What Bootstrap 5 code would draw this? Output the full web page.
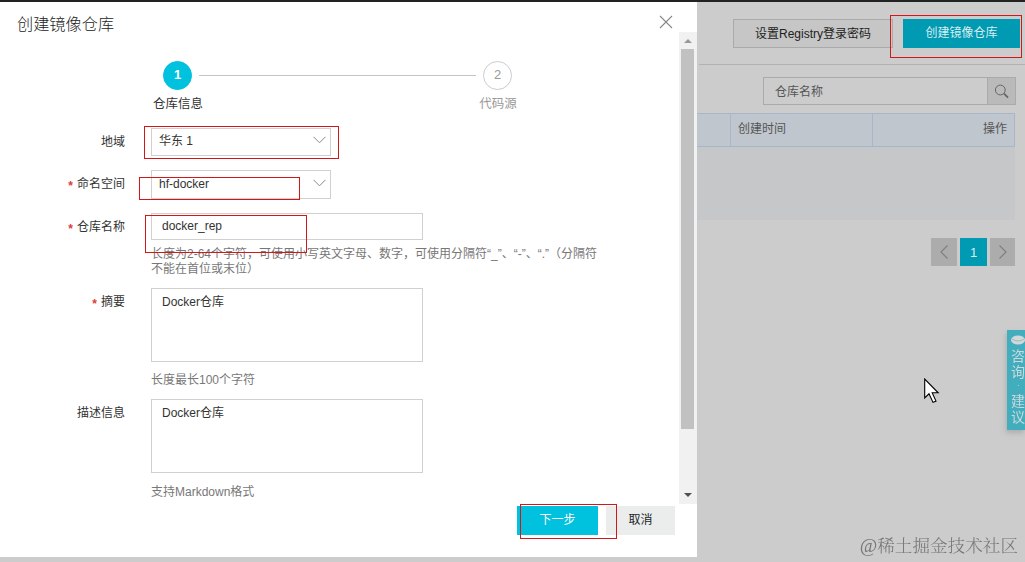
<!DOCTYPE html>
<html lang="zh-CN">
<head>
<meta charset="utf-8">
<meta name="viewport" content="width=device-width, initial-scale=1">
<title>创建镜像仓库</title>
<link href="https://cdn.jsdelivr.net/npm/bootstrap@5.3.0/dist/css/bootstrap.min.css" rel="stylesheet">
<style>
body{height:562px;overflow:hidden;background:#ccc;border-top:2px solid #222;font:12px/15px "Liberation Sans","Noto Sans CJK SC",sans-serif;color:#333;text-spacing-trim:space-all}
.panel{width:697px;height:555px;background:#fff}
.panel-head{height:30px;padding:6px 24px 0 17px}
.panel-head h1{font-size:16.2px;line-height:32px;font-weight:300;color:#222;margin:0}
.panel-body{height:472px}
.panel-foot{height:51px;padding:2px 22px 0 0;gap:8px}
.scroller{width:18px;background:#f1f1f1;padding:6px 3px 6px 2px}
.scroller i{display:block;height:380px;width:13px;background:#c1c1c1;margin-top:6px}
.flat{height:29px;border:0;border-radius:0;padding:0;font-size:12px;line-height:29px}
.cyan{background:#00c1de;color:#fff}
.dots{padding:29px 0 0 163px;gap:7px}
.dot{width:29px;height:29px;border:1px solid #ccc;border-radius:50%;font-size:13px;color:#999;padding-bottom:2px}
.dot.on{background:#00c1de;border-color:#00c1de;color:#fff;font-weight:700}
.bar{width:277px;height:1px;background:#c4c4c4}
.names{padding:7px 0 0 138px;gap:240px}
.names span{width:80px;text-align:center;font-size:12.5px}
.frow{display:grid;grid-template-columns:125px 1fr;column-gap:26px}
.frow>label{text-align:right;padding-top:7px}
.req::before{content:"*";color:#e03a3a;font-weight:700;margin-right:4px;position:relative;top:2px}
.box{border:1px solid #d0d0d0;width:272px;background:#fff;border-radius:0;color:#333;font-size:12px;line-height:15px}
.pick{width:180px;padding:0 4px 0 7px}
.area{height:74px;padding:6px 10px}
.hint{color:#777;width:450px;white-space:nowrap}
.side{width:328px}
.side-head{height:63px;margin-left:2px;padding:17px 5px 0 0;border-bottom:1px solid #b2b2b2;gap:10px}
.ghost{width:160px;height:29px;border:1px solid #aaa;background:#c6c6c6;line-height:26px;color:#222}
.dimcyan{background:#009ab2;color:#d9edf0}
.find{margin:12px 9px 0 66px;height:28px;border:1px solid #aaa}
.find span{padding:2px 0 0 11px;color:#555}
.find b{width:28px;background:#bababa;border-left:1px solid #aaa}
.thead-row{margin:8px 10px 0 0;height:34px;background:#c0c6cd;border:1px solid #a9b6ca;border-left:0;color:#555}
.thead-row div{height:32px;line-height:30px;padding:0 7px}
.thead-row div+div{border-left:1px solid #a9b6ca}
.tbody-row{margin-right:10px;height:73px;background:#c5c7c8}
.pages{margin:18px 10px 0 0;gap:3px}
.pages span{width:26px;height:28px;background:#acacac}
.pages .now{width:27px;background:#009ab2;color:#dceef1;font-size:13px}
.consult{left:1007px;top:330px;width:18px;height:100px;background:#41adbd;color:#cbd9dc;box-shadow:-1px 3px 5px #9999;font-size:14px;line-height:16px;padding:5px 0 0 4px;overflow:hidden}
.consult span{display:block;width:15px}
.consult .sep{height:13px;line-height:12px;font-size:8px;padding-left:6px}
.water{right:7px;bottom:4px;font:300 17.6px/24px "Liberation Serif","Noto Serif CJK SC","Noto Sans CJK SC",serif;color:#777;white-space:nowrap}
.water span{font-size:19px}
.redbox{border:1px solid #d01818}
</style>
</head>
<body>
<div class="d-flex">
  <main class="panel">
    <header class="panel-head d-flex justify-content-between">
      <h1>创建镜像仓库</h1>
      <svg width="14" height="14" viewBox="0 0 14 14" style="margin-top:7px" stroke="#888" stroke-width="1.1"><path d="M1 1l12 12M13 1L1 13"/></svg>
    </header>
    <div class="panel-body d-flex justify-content-between">
      <div>
        <div class="dots d-flex align-items-center">
          <span class="dot on d-flex align-items-center justify-content-center">1</span><span class="bar"></span><span class="dot d-flex align-items-center justify-content-center">2</span>
        </div>
        <div class="names d-flex"><span>仓库信息</span><span style="color:#999">代码源</span></div>
        <div class="frow" style="margin-top:16px"><label>地域</label>
          <div class="box pick d-flex align-items-center justify-content-between" style="height:28px"><span style="padding-bottom:1px">华东 1</span><svg width="13" height="8" viewBox="0 0 13 8" fill="none" stroke="#888" class="mb-1"><path d="M.5 .8l6 6 6-6"/></svg></div></div>
        <div class="frow" style="margin-top:14px"><label class="req">命名空间</label>
          <div class="box pick d-flex align-items-center justify-content-between" style="height:29px"><span>hf-docker</span><svg width="13" height="8" viewBox="0 0 13 8" fill="none" stroke="#888" class="mb-1"><path d="M.5 .8l6 6 6-6"/></svg></div></div>
        <div class="frow" style="margin-top:14px"><label class="req">仓库名称</label>
          <div><div class="box d-flex align-items-center" style="height:27px;padding:0 10px"><span>docker_rep</span></div>
          <div class="hint" style="margin-top:7px">长度为2-64个字符，可使用小写英文字母、数字，可使用分隔符“_”、“-”、“.”（分隔符<br>不能在首位或末位）</div></div></div>
        <div class="frow" style="margin-top:11px"><label class="req">摘要</label>
          <div><div class="box area">Docker仓库</div><div class="hint" style="margin-top:11px">长度最长100个字符</div></div></div>
        <div class="frow" style="margin-top:11px"><label>描述信息</label>
          <div><div class="box area">Docker仓库</div><div class="hint" style="margin-top:12px">支持Markdown格式</div></div></div>
      </div>
      <div class="scroller d-flex flex-column align-items-center">
        <svg width="8" height="5" viewBox="0 0 8 5"><path d="M0 5l4-4 4 4z" fill="#999"/></svg><i></i>
        <svg class="mt-auto" width="8" height="5" viewBox="0 0 8 5"><path d="M0 0h8L4 4z" fill="#505050"/></svg>
      </div>
    </div>
    <footer class="panel-foot d-flex justify-content-end">
      <button class="btn flat cyan" style="width:81px">下一步</button>
      <button class="btn flat" style="width:69px;background:#ebecec">取消</button>
    </footer>
  </main>
  <aside class="side">
    <div class="side-head d-flex justify-content-end">
      <button class="btn flat ghost">设置Registry登录密码</button>
      <button class="btn flat dimcyan" style="width:117px">创建镜像仓库</button>
    </div>
    <div class="find d-flex justify-content-between align-items-stretch"><span class="align-self-center">仓库名称</span>
      <b class="d-flex align-items-center justify-content-center"><svg width="15" height="15" viewBox="0 0 15 15" fill="none" stroke="#666"><circle cx="6.3" cy="6" r="4.9"/><path d="M10 9.7l4 4" stroke-width="1.7"/></svg></b></div>
    <div class="thead-row d-flex"><div style="width:33px"></div><div style="width:142px">创建时间</div><div class="flex-fill text-end">操作</div></div>
    <div class="tbody-row"></div>
    <div class="pages d-flex justify-content-end">
      <span class="d-flex align-items-center justify-content-center"><svg width="8" height="14" viewBox="0 0 8 14" fill="none" stroke="#808080" stroke-width="1.2"><path d="M7.5 .5L1 7l6.500 6.500"/></svg></span>
      <span class="now d-flex align-items-center justify-content-center">1</span>
      <span class="d-flex align-items-center justify-content-center" style="width:25px"><svg width="8" height="14" viewBox="0 0 8 14" fill="none" stroke="#808080" stroke-width="1.2"><path d="M.5 .5L7 7 .5 13.500"/></svg></span>
    </div>
  </aside>
</div>
<div class="consult position-fixed"><svg class="d-block" width="15" height="13" viewBox="0 0 15 13"><ellipse cx="7" cy="5" rx="7" ry="4.500" fill="#d3d8d9"/><path d="M1 4q6 4 12 0" stroke="#98bcc2" fill="none"/></svg><span>咨询</span><span class="sep">·</span><span>建议</span></div>
<svg class="position-fixed" style="left:924px;top:378px" width="16" height="26" viewBox="0 0 16 26"><path d="M.7 1v19l4.300-4.200 4 8.600 3-1.300-3.800-8.300h6z" fill="#fff" stroke="#000" stroke-width="1.100"/></svg>
<div class="water position-fixed"><span>@</span>稀土掘金技术社区</div>
<div class="redbox position-fixed" style="left:890px;top:15px;width:132px;height:43px"></div>
<div class="redbox position-fixed" style="left:144px;top:126px;width:195px;height:33px"></div>
<div class="redbox position-fixed" style="left:139px;top:177px;width:161px;height:23px"></div>
<div class="redbox position-fixed" style="left:145px;top:215px;width:162px;height:38px"></div>
<div class="redbox position-fixed" style="left:520px;top:504px;width:97px;height:35px"></div>
<script src="https://cdn.jsdelivr.net/npm/bootstrap@5.3.0/dist/js/bootstrap.bundle.min.js"></script>
</body>
</html>
